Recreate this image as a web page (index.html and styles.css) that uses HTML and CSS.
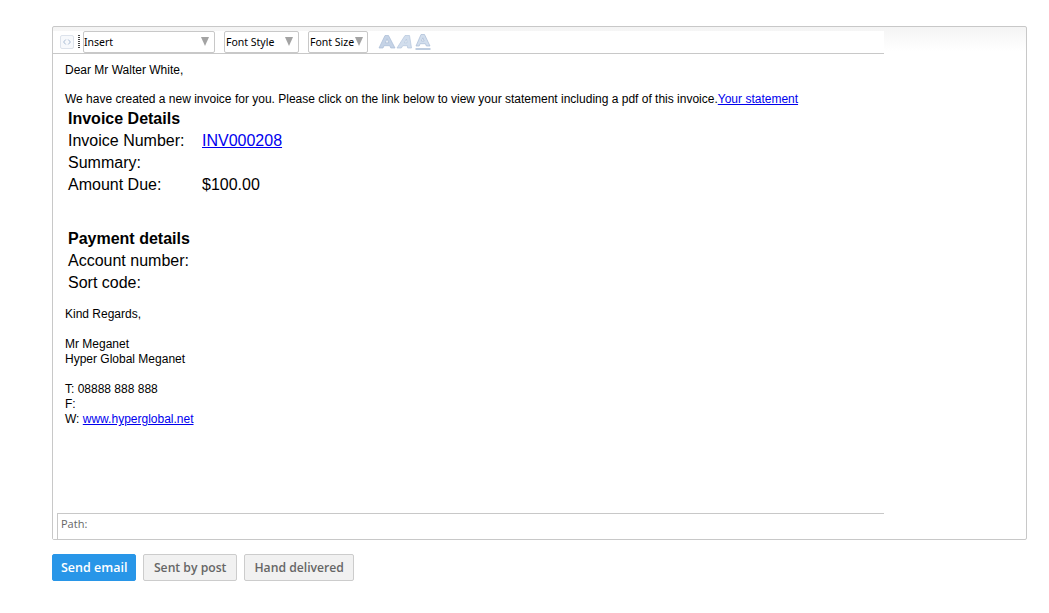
FILE: index.html
```html
<!DOCTYPE html>
<html lang="en">
<head>
<meta charset="utf-8">
<title>Invoice email</title>
<link rel="stylesheet" href="styles.css">
</head>
<body>
<main class="page">
  <section class="frame">
    <div class="editor">
      <div class="toolbar">
        <span class="code-btn">
          <svg width="16" height="16" viewBox="0 0 16 16"><rect x="1.500" y="1.500" width="13" height="13" rx="1.500" fill="#f7f9fc" stroke="#dde3ec"/><path d="M6.800 5.500 4.600 8 6.800 10.500M9.200 5.500 11.400 8 9.200 10.500" fill="none" stroke="#a9bcd4" stroke-width="1"/></svg>
        </span>
        <span class="grip"></span>
        <span class="select select-insert"><span>Insert</span><i class="arrow"></i></span>
        <span class="select select-style"><span>Font Style</span><i class="arrow"></i></span>
        <span class="select select-size"><span>Font Size</span><i class="arrow"></i></span>
        <span class="format-icons">
          <svg width="18" height="18" viewBox="0 0 18 18"><path d="M1 15 7 2.500h3.500L17 15h-4.200l-1-2.300H6L5 15Zm6.400-5.200h3.300L9 5.800Z" fill="#c5d3e6" stroke="#a9bcd6" stroke-width=".7"/></svg>
          <svg width="18" height="18" viewBox="0 0 18 18"><path d="M1 15 9 2.500h4.500L15.500 15h-3.800l-.4-2.300H6.800L5.300 15Zm7.500-5.200h2.500L10.500 6Z" fill="#d2deed" stroke="#b4c5dc" stroke-width=".7"/></svg>
          <svg width="18" height="18" viewBox="0 0 18 18"><path d="M2 13 7 1.500h3.500L16 13h-3.600l-1-2.300H6.100L5.200 13Zm5.500-5h2.600L8.800 4.800Z" fill="#d2deed" stroke="#a9bcd6" stroke-width=".7"/><path d="M1.500 16h15" stroke="#a9bcd6" stroke-width="1.500"/></svg>
        </span>
      </div>
      <article class="body-copy">
        <p class="line">Dear Mr Walter White,</p>
        <p class="line intro">We have created a new invoice for you. Please click on the link below to view your statement including a pdf of this invoice.<a href="#">Your statement</a></p>
        <div class="details">
          <div class="detail-title">Invoice Details</div>
          <div class="detail-row"><span class="detail-label">Invoice Number:</span><a href="#">INV000208</a></div>
          <div class="detail-row"><span class="detail-label">Summary:</span></div>
          <div class="detail-row"><span class="detail-label">Amount Due:</span><span>$100.00</span></div>
        </div>
        <div class="details payment">
          <div class="detail-title">Payment details</div>
          <div class="detail-row"><span class="detail-label">Account number:</span></div>
          <div class="detail-row"><span class="detail-label">Sort code:</span></div>
        </div>
        <p class="line regards">Kind Regards,</p>
        <p class="line signature">Mr Meganet<br>Hyper Global Meganet</p>
        <p class="line signature">T: 08888 888 888<br>F:<br>W: <a href="#">www.hyperglobal.net</a></p>
      </article>
      <div class="path">Path:</div>
    </div>
  </section>
  <div class="actions">
    <button class="btn btn-primary" type="button">Send email</button>
    <button class="btn btn-plain" type="button">Sent by post</button>
    <button class="btn btn-plain" type="button">Hand delivered</button>
  </div>
</main>
</body>
</html>
```

FILE: styles.css
```css
* { box-sizing: border-box; }
html, body { margin: 0; padding: 0; background: #fff; }
body { width: 1049px; height: 613px; overflow: hidden; }
.page { padding: 26px 22px 0 52px; }
.frame {
  height: 514px;
  border: 1px solid #c8c8c8;
  border-radius: 2px;
  padding: 4px 0 0;
  background: linear-gradient(to bottom, #f4f4f4 0, #fff 24px);
}
.editor {
  width: 831px;
  height: 508px;
  background: #fff;
  display: flex;
  flex-direction: column;
  position: relative;
}
.toolbar {
  height: 23px;
  border-bottom: 1px solid #c8c8c8;
  display: flex;
  align-items: flex-start;
  padding-left: 6px;
  font: 11px "Liberation Sans", Arial, sans-serif;
  color: #000;
}
.code-btn { display: block; width: 16px; height: 16px; margin-top: 3px; }
.grip {
  width: 2px;
  height: 14px;
  margin: 4px 3px 0 3px;
  background: repeating-linear-gradient(to bottom, #444 0, #444 1px, #fff 1px, #fff 2px);
}
.select {
  height: 22px;
  border: 1px solid #c8c8c8;
  border-radius: 2px;
  background: #fff;
  display: flex;
  align-items: center;
  justify-content: space-between;
  padding: 0 5px 1px 0;
  font-family: "Noto Sans", sans-serif;
  font-size: 10.5px;
  white-space: nowrap;
}
.select-insert { width: 132px; }
.select-style { width: 75px; margin-left: 9px; padding-left: 1px; }
.select-size { width: 60px; margin-left: 9px; padding-left: 1px; padding-right: 4px; }
.arrow {
  width: 0;
  height: 0;
  border-left: 4.5px solid transparent;
  border-right: 4.5px solid transparent;
  border-top: 9px solid #a3a3a3;
}
.format-icons { display: flex; margin-left: 10px; margin-top: 2px; }
.body-copy {
  flex: 1;
  padding: 9px 0 0 12px;
  font: 12px/15px "Liberation Sans", Arial, sans-serif;
  color: #000;
}
.body-copy a { color: #00e; text-decoration: underline; }
.line { margin: 0; }
.intro { margin-top: 14px; }
.details { padding-left: 3px; margin-top: 1px; font-size: 16px; line-height: 22px; }
.payment { margin-top: 32px; }
.detail-title { font-weight: 700; }
.detail-row { display: flex; }
.detail-label { width: 134px; }
.regards { margin-top: 13px; }
.signature { margin-top: 15px; }
.path {
  height: 26px;
  margin-left: 4px;
  border-top: 1px solid #c8c8c8;
  border-left: 1px solid #c8c8c8;
  padding: 2px 0 0 3px;
  font: 11px/16px "Open Sans", sans-serif;
  color: #666;
}
.actions { display: flex; gap: 7px; margin-top: 14px; }
.btn {
  height: 27px;
  border: 1px solid #ccc;
  border-radius: 2px;
  font-family: "Open Sans", sans-serif;
  font-weight: 600;
  cursor: pointer;
}
.btn-plain {
  padding: 0 9.5px;
  background: #f1f1f1;
  color: #666;
  font-size: 12.2px;
}
.btn-primary {
  background: #2896e8;
  border-color: #2896e8;
  color: #fff;
  padding: 0 8px;
  font-size: 12.5px;
}
```
